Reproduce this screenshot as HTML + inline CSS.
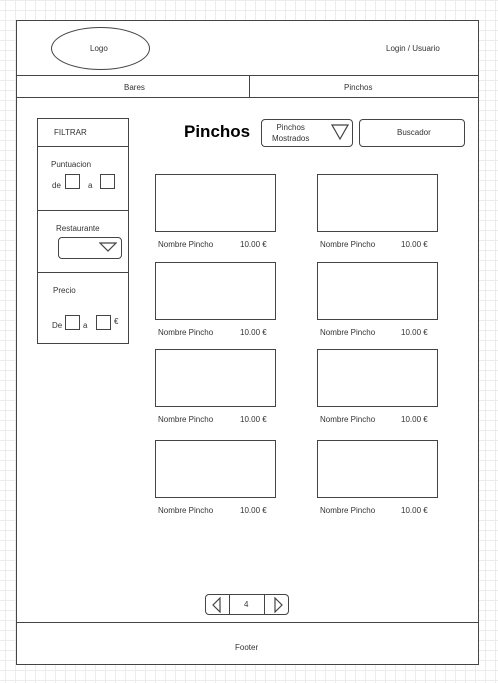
<!DOCTYPE html><html><head><style>
body{margin:0;width:498px;height:683px;position:relative;overflow:hidden;font-family:"Liberation Sans",sans-serif;color:#333;
background-color:#fff;background-image:linear-gradient(#ececec 1px,transparent 1px),linear-gradient(90deg,#ececec 1px,transparent 1px);background-size:10px 10px;background-position:5px 0}
.a{position:absolute;box-sizing:border-box}
.b{border:1.3px solid #444}
.t{position:absolute;font-size:8px;white-space:nowrap}
.card{position:absolute;box-sizing:border-box;border:1.3px solid #444;width:121px;height:58px;background:#fff}
</style></head><body>
<div class="a b" style="left:16px;top:20px;width:463px;height:645px;background:#fff"></div>
<div class="a b" style="left:51px;top:27px;width:99px;height:43px;border-radius:50%"></div>
<div class="t" style="left:90px;top:44px">Logo</div>
<div class="t" style="left:386px;top:44px">Login / Usuario</div>
<div class="a" style="left:16px;top:75px;width:463px;height:1.3px;background:#444"></div>
<div class="a" style="left:16px;top:97px;width:463px;height:1.3px;background:#444"></div>
<div class="a" style="left:249px;top:75px;width:1.3px;height:23px;background:#444"></div>
<div class="t" style="left:124px;top:83px">Bares</div>
<div class="t" style="left:344px;top:83px">Pinchos</div>
<div class="a" style="left:16px;top:622px;width:463px;height:1.3px;background:#444"></div>
<div class="t" style="left:235px;top:643px">Footer</div>

<div class="a b" style="left:37px;top:118px;width:92px;height:226px"></div>
<div class="a" style="left:37px;top:146px;width:92px;height:1.3px;background:#444"></div>
<div class="a" style="left:37px;top:210px;width:92px;height:1.3px;background:#444"></div>
<div class="a" style="left:37px;top:272px;width:92px;height:1.3px;background:#444"></div>
<div class="t" style="left:54px;top:128px">FILTRAR</div>
<div class="t" style="left:51px;top:160px">Puntuacion</div>
<div class="t" style="left:52px;top:181px">de</div>
<div class="a b" style="left:65px;top:174px;width:15px;height:15px"></div>
<div class="t" style="left:88px;top:181px">a</div>
<div class="a b" style="left:100px;top:174px;width:15px;height:15px"></div>
<div class="t" style="left:56px;top:224px">Restaurante</div>
<div class="a b" style="left:58px;top:237px;width:64px;height:22px;border-radius:4px"></div>
<svg class="a" style="left:99px;top:242px" width="18" height="11"><path d="M1 1H17L9 9Z" fill="none" stroke="#444" stroke-width="1.2"/></svg>
<div class="t" style="left:53px;top:286px">Precio</div>
<div class="t" style="left:52px;top:321px">De</div>
<div class="a b" style="left:65px;top:315px;width:15px;height:15px"></div>
<div class="t" style="left:83px;top:321px">a</div>
<div class="a b" style="left:96px;top:315px;width:15px;height:15px"></div>
<div class="t" style="left:114px;top:317px">€</div>

<div class="t" style="left:184px;top:122px;font-size:17px;font-weight:bold;color:#000">Pinchos</div>
<div class="a b" style="left:261px;top:119px;width:92px;height:28px;border-radius:4px"></div>
<div class="t" style="left:272px;top:122px;text-align:center;line-height:11px">Pinchos<br>Mostrados</div>
<svg class="a" style="left:331px;top:124px" width="18" height="16"><path d="M1 1H17L9 15Z" fill="none" stroke="#444" stroke-width="1.2"/></svg>
<div class="a b" style="left:359px;top:119px;width:106px;height:28px;border-radius:4px"></div>
<div class="t" style="left:397px;top:128px">Buscador</div>

<div class="card" style="left:155px;top:174px"></div><div class="card" style="left:317px;top:174px"></div>
<div class="card" style="left:155px;top:262px"></div><div class="card" style="left:317px;top:262px"></div>
<div class="card" style="left:155px;top:349px"></div><div class="card" style="left:317px;top:349px"></div>
<div class="card" style="left:155px;top:440px"></div><div class="card" style="left:317px;top:440px"></div>
<div class="t" style="left:158px;top:240px">Nombre Pincho</div><div class="t" style="left:240px;top:240px">10.00 €</div>
<div class="t" style="left:320px;top:240px">Nombre Pincho</div><div class="t" style="left:401px;top:240px">10.00 €</div>
<div class="t" style="left:158px;top:328px">Nombre Pincho</div><div class="t" style="left:240px;top:328px">10.00 €</div>
<div class="t" style="left:320px;top:328px">Nombre Pincho</div><div class="t" style="left:401px;top:328px">10.00 €</div>
<div class="t" style="left:158px;top:415px">Nombre Pincho</div><div class="t" style="left:240px;top:415px">10.00 €</div>
<div class="t" style="left:320px;top:415px">Nombre Pincho</div><div class="t" style="left:401px;top:415px">10.00 €</div>
<div class="t" style="left:158px;top:506px">Nombre Pincho</div><div class="t" style="left:240px;top:506px">10.00 €</div>
<div class="t" style="left:320px;top:506px">Nombre Pincho</div><div class="t" style="left:401px;top:506px">10.00 €</div>

<div class="a b" style="left:205px;top:594px;width:84px;height:21px;border-radius:4px"></div>
<div class="a b" style="left:229px;top:594px;width:36px;height:21px"></div>
<div class="t" style="left:244px;top:600px">4</div>
<svg class="a" style="left:211px;top:597px" width="12" height="16"><path d="M9 1V15L2 8Z" fill="none" stroke="#444" stroke-width="1.2"/></svg>
<svg class="a" style="left:272px;top:597px" width="12" height="16"><path d="M3 1V15L10 8Z" fill="none" stroke="#444" stroke-width="1.2"/></svg>
</body></html>
